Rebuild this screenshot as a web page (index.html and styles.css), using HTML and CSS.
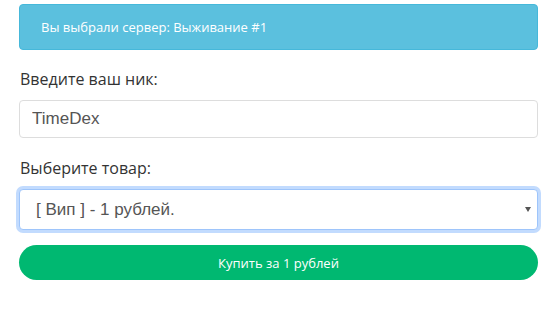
FILE: index.html
```html
<!DOCTYPE html>
<html lang="ru">
<head>
    <meta charset="UTF-8">
    <meta name="viewport" content="width=device-width, initial-scale=1.0">
    <title>Покупка</title>
    <link rel="stylesheet" href="styles.css">
</head>
<body>
    <div class="shop">
        <!-- Выбранный сервер -->
        <div class="alert-info">Вы выбрали сервер: Выживание #1</div>

        <form class="buy-form">
            <label for="nick">Введите ваш ник:</label>
            <input type="text" id="nick" class="field" value="TimeDex">

            <label for="item" class="label-select">Выберите товар:</label>
            <div class="select-wrap">
                <select id="item" class="field select-field">
                    <option>[ Вип ] - 1 рублей.</option>
                </select>
            </div>

            <button type="button" class="buy-btn">Купить за 1 рублей</button>
        </form>
    </div>
</body>
</html>
```

FILE: styles.css
```css
* {
    margin: 0;
    padding: 0;
    box-sizing: border-box;
}

body {
    font-family: "Open Sans", sans-serif;
    background-color: #ffffff;
    color: #333;
}

.shop {
    padding: 4px 20px 0 19px;
}

.alert-info {
    height: 46px;
    padding: 0 21px;
    display: flex;
    align-items: center;
    background-color: #5bc0de;
    border: 1px solid #46b8da;
    border-radius: 4px;
    color: #fff;
    font-size: 13px;
}

.buy-form {
    display: flex;
    flex-direction: column;
}

.buy-form label {
    font-size: 16px;
    margin: 18px 0 10px 1px;
    line-height: 22px;
}

.buy-form .label-select {
    margin-top: 19px;
}

.field {
    height: 38px;
    padding: 0 12px;
    border: 1px solid #ddd;
    border-radius: 4px;
    font-family: "Liberation Sans", Arial, sans-serif;
    font-size: 17px;
    color: #555;
    background: #fff;
    outline: none;
}

.select-wrap {
    position: relative;
}

.select-field {
    width: 100%;
    height: 41px;
    padding: 0 16px;
    appearance: none;
    border: 1px solid #9ec5fb;
    box-shadow: 0 0 0 3px #c2dbfe;
}

.select-wrap::after {
    content: "";
    position: absolute;
    right: 7px;
    top: 18px;
    border-left: 3px solid transparent;
    border-right: 3px solid transparent;
    border-top: 5px solid #555;
}

.buy-btn {
    margin-top: 15px;
    height: 35px;
    border: none;
    border-radius: 18px;
    background-color: #00b871;
    color: #fff;
    font-family: "Open Sans", sans-serif;
    font-size: 13px;
    cursor: pointer;
}
```
